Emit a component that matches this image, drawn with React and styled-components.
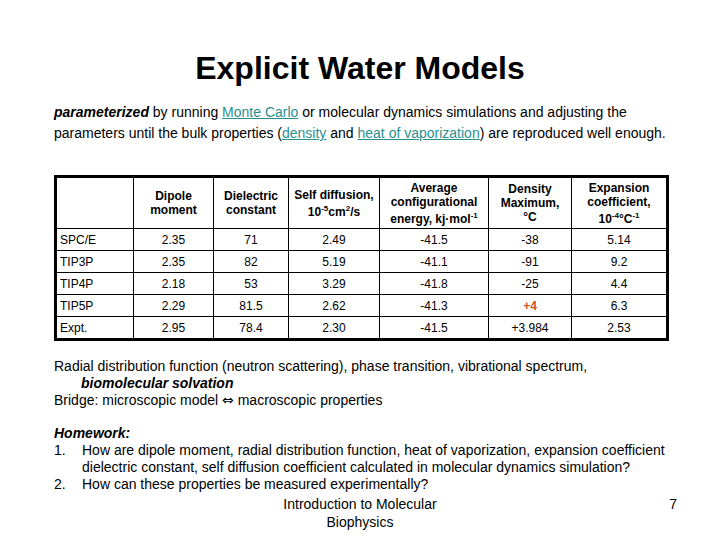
import React from "react";
import styled, { createGlobalStyle } from "styled-components";

const Global = createGlobalStyle`
  html, body { margin: 0; padding: 0; background: #fff; }
  body { font-family: "Liberation Sans", Arial, sans-serif; color: #000; }
`;

const Page = styled.div`
  width: 720px;
  height: 540px;
  box-sizing: border-box;
  padding: 50px 0 0 54px;
  overflow: hidden;
`;

const Title = styled.h1`
  margin: 0 0 0 -54px;
  width: 720px;
  text-align: center;
  font-size: 32px;
  font-weight: bold;
  line-height: 36px;
`;

const Intro = styled.p`
  margin: 16px 0 0;
  font-size: 14px;
  line-height: 21px;
  white-space: nowrap;
`;

const Link = styled.span`
  color: #2a8f8f;
  text-decoration: underline;
`;

const Table = styled.table`
  margin-top: 31px;
  border-collapse: collapse;
  border: 3px solid #000;
  table-layout: fixed;
  width: 612px;
  font-size: 12px;
`;

const Th = styled.th`
  border: 1px solid #000;
  font-weight: bold;
  font-size: 12px;
  line-height: 14px;
  height: 50px;
  padding: 0 2px;
  text-align: center;
  vertical-align: middle;
`;

const Sup = styled.sup`
  font-size: 8px;
`;

const Td = styled.td`
  border: 1px solid #000;
  height: 21px;
  padding: 0 3px;
  text-align: ${(p) => (p.$left ? "left" : "center")};
  color: ${(p) => (p.$hot ? "#c9521f" : "#000")};
  font-weight: ${(p) => (p.$hot ? "bold" : "normal")};
`;

const Notes = styled.div`
  margin-top: 17px;
  font-size: 14px;
  line-height: 17px;
`;

const Indent = styled.div`
  padding-left: 27px;
`;

const BoldItalic = styled.span`
  font-weight: bold;
  font-style: italic;
`;

const Arrow = styled.span`
  font-family: "DejaVu Sans", sans-serif;
  font-size: 14px;
`;

const Homework = styled.div`
  margin-top: 16px;
  font-size: 14px;
  line-height: 17px;
`;

const Item = styled.div`
  display: flex;
`;

const Num = styled.span`
  width: 28px;
  flex: none;
`;

const Footer = styled.div`
  margin: 2px 0 0 -54px;
  width: 720px;
  display: grid;
  grid-template-columns: 1fr 220px 1fr;
  font-size: 14px;
  line-height: 18px;
`;

const FooterCenter = styled.div`
  text-align: center;
`;

const PageNum = styled.div`
  text-align: right;
  padding-right: 43px;
`;

const cols = [78, 80, 75, 91, 109, 83, 96];

const rows = [
  ["SPC/E", "2.35", "71", "2.49", "-41.5", "-38", "5.14"],
  ["TIP3P", "2.35", "82", "5.19", "-41.1", "-91", "9.2"],
  ["TIP4P", "2.18", "53", "3.29", "-41.8", "-25", "4.4"],
  ["TIP5P", "2.29", "81.5", "2.62", "-41.3", "+4", "6.3"],
  ["Expt.", "2.95", "78.4", "2.30", "-41.5", "+3.984", "2.53"],
];

export default function App() {
  return (
    <>
      <Global />
      <Page>
        <Title>Explicit Water Models</Title>
        <Intro>
          <BoldItalic>parameterized</BoldItalic> by running <Link>Monte Carlo</Link> or
          molecular dynamics simulations and adjusting the
          <br />
          parameters until the bulk properties (<Link>density</Link> and{" "}
          <Link>heat of vaporization</Link>) are reproduced well enough.
        </Intro>
        <Table>
          <colgroup>
            {cols.map((w, i) => (
              <col key={i} style={{ width: w }} />
            ))}
          </colgroup>
          <thead>
            <tr>
              <Th></Th>
              <Th>Dipole<br />moment</Th>
              <Th>Dielectric<br />constant</Th>
              <Th>
                Self diffusion,<br />
                10<Sup>-5</Sup>cm<Sup>2</Sup>/s
              </Th>
              <Th>Average<br />configurational<br />energy, kj·mol<Sup>-1</Sup></Th>
              <Th>Density<br />Maximum,<br />°C</Th>
              <Th>Expansion<br />coefficient,<br />10<Sup>-4</Sup>°C<Sup>-1</Sup></Th>
            </tr>
          </thead>
          <tbody>
            {rows.map((r) => (
              <tr key={r[0]}>
                {r.map((c, i) => (
                  <Td key={i} $left={i === 0} $hot={c === "+4"}>{c}</Td>
                ))}
              </tr>
            ))}
          </tbody>
        </Table>
        <Notes>
          <div>Radial distribution function (neutron scattering), phase transition, vibrational spectrum,</div>
          <Indent><BoldItalic>biomolecular solvation</BoldItalic></Indent>
          <div>Bridge: microscopic model <Arrow>⇔</Arrow> macroscopic properties</div>
        </Notes>
        <Homework>
          <BoldItalic>Homework:</BoldItalic>
          <Item>
            <Num>1.</Num>
            <span>
              How are dipole moment, radial distribution function, heat of vaporization, expansion coefficient
              <br />
              dielectric constant, self diffusion coefficient calculated in molecular dynamics simulation?
            </span>
          </Item>
          <Item>
            <Num>2.</Num>
            <span>How can these properties be measured experimentally?</span>
          </Item>
        </Homework>
        <Footer>
          <div />
          <FooterCenter>Introduction to Molecular<br />Biophysics</FooterCenter>
          <PageNum>7</PageNum>
        </Footer>
      </Page>
    </>
  );
}
